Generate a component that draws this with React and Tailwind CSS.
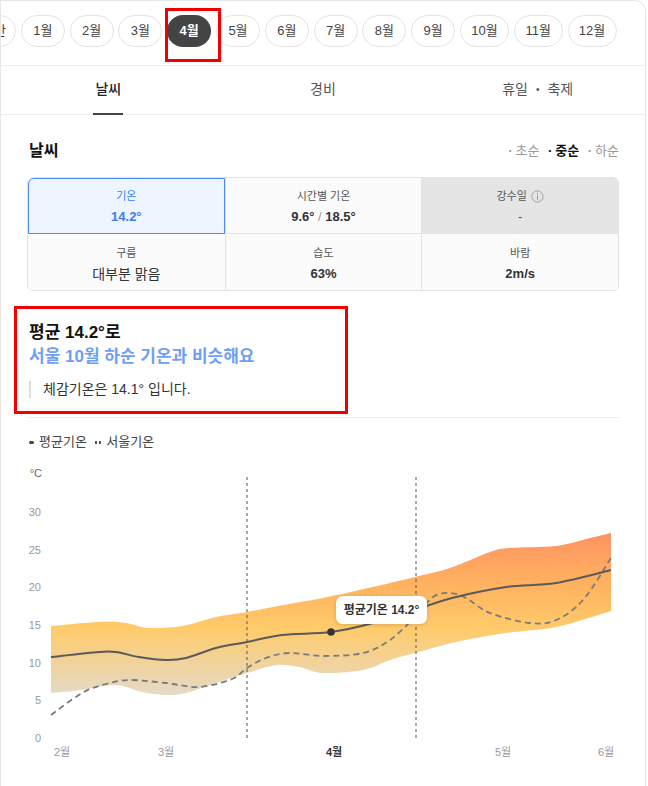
import React from 'react';

const months = ['1월', '2월', '3월', '4월', '5월', '6월', '7월', '8월', '9월', '10월', '11월', '12월'];

// catmull-rom -> bezier, used for the chart curves
function curve(pts, move = true) {
  let d = move ? `M${pts[0][0]},${pts[0][1]}` : `L${pts[0][0]},${pts[0][1]}`;
  for (let i = 0; i < pts.length - 1; i++) {
    const p0 = pts[i - 1] || pts[i];
    const p1 = pts[i];
    const p2 = pts[i + 1];
    const p3 = pts[i + 2] || p2;
    const c1 = [p1[0] + (p2[0] - p0[0]) / 6, p1[1] + (p2[1] - p0[1]) / 6];
    const c2 = [p2[0] - (p3[0] - p1[0]) / 6, p2[1] - (p3[1] - p1[1]) / 6];
    d += ` C${c1[0]},${c1[1]} ${c2[0]},${c2[1]} ${p2[0]},${p2[1]}`;
  }
  return d;
}

const upper = [[52, 626], [100, 622], [127, 623], [150, 628], [183, 626], [217, 617], [248, 612], [290, 604], [324, 598], [374, 587], [416, 577], [451, 568], [491, 552], [511, 548], [557, 546], [591, 538], [612, 533]];
const lower = [[52, 693], [83, 690], [117, 685], [143, 692], [167, 695], [187, 693], [217, 683], [248, 673], [277, 665], [300, 667], [324, 673], [364, 670], [391, 660], [416, 653], [457, 642], [507, 633], [557, 627], [612, 611]];
const mean = [[52, 657], [100, 652], [117, 652], [140, 657], [167, 660], [187, 658], [217, 648], [248, 642], [283, 635], [332, 632], [374, 623], [424, 607], [457, 597], [507, 587], [557, 583], [612, 570]];
const seoul = [[52, 715], [83, 693], [107, 684], [130, 680], [167, 683], [200, 687], [233, 679], [248, 668], [267, 658], [290, 653], [324, 656], [364, 653], [391, 640], [416, 617], [434, 597], [451, 593], [467, 598], [491, 613], [531, 623], [557, 620], [584, 600], [612, 558]];

const band = curve(upper) + ' ' + curve([...lower].reverse(), false) + ' Z';

function Chart() {
  const yTicks = [30, 25, 20, 15, 10, 5, 0];
  const xLabels = [['2월', 63], ['3월', 167], ['4월', 335], ['5월', 504], ['6월', 607]];
  return (
    <svg width="592" height="300" viewBox="28 462 592 300" className="mt-[10px] block">
      <defs>
        <linearGradient id="band" gradientUnits="userSpaceOnUse" x1="0" y1="530" x2="0" y2="695">
          <stop offset="0" stopColor="#fd9161" />
          <stop offset="0.35" stopColor="#ffb45f" />
          <stop offset="0.6" stopColor="#ffcb6b" />
          <stop offset="1" stopColor="#e4dac8" />
        </linearGradient>
        <filter id="shadow" x="-20%" y="-40%" width="140%" height="180%">
          <feDropShadow dx="0" dy="1" stdDeviation="2" floodColor="#000" floodOpacity="0.15" />
        </filter>
      </defs>
      <text x="43" y="474" textAnchor="end" dominantBaseline="middle" fontSize="11" fill="#666">°C</text>
      {yTicks.map((v) => (
        <text key={v} x="42" y={739 - v * 7.533} textAnchor="end" dominantBaseline="middle" fontSize="11" fill="#999">
          {v}
        </text>
      ))}
      <path d={band} fill="url(#band)" />
      <line x1="248" y1="477" x2="248" y2="740" stroke="#555" strokeWidth="1" strokeDasharray="3 3" />
      <line x1="417" y1="477" x2="417" y2="740" stroke="#555" strokeWidth="1" strokeDasharray="3 3" />
      <path d={curve(seoul)} fill="none" stroke="#7a7a7a" strokeWidth="1.8" strokeDasharray="6 4" />
      <path d={curve(mean)} fill="none" stroke="#5a5a5a" strokeWidth="2" />
      <circle cx="332" cy="632" r="3.8" fill="#333" />
      <rect x="337" y="596" width="91" height="28" rx="7" fill="#fff" filter="url(#shadow)" />
      <text x="382.5" y="610.5" textAnchor="middle" dominantBaseline="middle" fontSize="12" fontWeight="600" fill="#333">
        평균기온 14.2°
      </text>
      {xLabels.map(([t, x]) => (
        <text
          key={t}
          x={x}
          y="753"
          textAnchor="middle"
          dominantBaseline="middle"
          fontSize="11"
          fontWeight={t === '4월' ? 700 : 400}
          fill={t === '4월' ? '#333' : '#999'}
        >
          {t}
        </text>
      ))}
    </svg>
  );
}

function Cell({ label, value, className = '', labelClass = 'text-[#555]', valueClass = 'text-[13px] font-bold text-[#333]', info }) {
  return (
    <div className={`flex h-[56px] flex-col items-center justify-center gap-[3px] pt-1 ${className}`}>
      <div className={`flex items-center gap-1 text-[11px] leading-4 ${labelClass}`}>
        {label}
        {info && (
          <svg width="13" height="13" viewBox="0 0 14 14" className="text-[#999]">
            <circle cx="7" cy="7" r="6" fill="none" stroke="currentColor" strokeWidth="1" />
            <line x1="7" y1="6" x2="7" y2="10.5" stroke="currentColor" strokeWidth="1.1" />
            <circle cx="7" cy="4" r="0.8" fill="currentColor" />
          </svg>
        )}
      </div>
      <div className={`leading-5 ${valueClass}`}>{value}</div>
    </div>
  );
}

export default function App() {
  return (
    <div className="min-h-screen bg-white font-['Liberation_Sans','Noto_Sans_CJK_KR',sans-serif] text-[#222]">
      <div className="relative min-h-[786px] w-[646px] overflow-hidden rounded-tr-xl border-x border-t border-[#e6e6e6]">
        {/* month pills */}
        <div className="flex h-[65px] gap-[4.8px] overflow-hidden border-b border-[#ececec] pt-[14px]">
          <div className="ml-[-29px] flex h-8 w-11 shrink-0 items-center justify-center rounded-full border border-[#e3e3e3] text-[13px] text-[#444]">
            연간
          </div>
          {months.map((m) => (
            <div
              key={m}
              className={`flex h-8 shrink-0 items-center justify-center rounded-full text-[13px] ${
                m.length > 2 ? 'w-[49px]' : 'w-11'
              } ${m === '4월' ? 'bg-[#444] font-bold text-white' : 'border border-[#e3e3e3] text-[#444]'}`}
            >
              {m}
            </div>
          ))}
        </div>

        {/* tabs */}
        <div className="grid h-[49px] grid-cols-3 border-b border-[#ececec] text-[14px]">
          <div className="flex items-center justify-center">
            <span className="relative flex h-full items-center pb-px font-medium text-[#222]">
              날씨
              <span className="absolute -bottom-px left-[-2px] right-[-2px] h-[2px] bg-[#444]" />
            </span>
          </div>
          <div className="flex items-center justify-center pb-px text-[#555]">경비</div>
          <div className="flex items-center justify-center gap-2 pb-px text-[#555]">
            <span>휴일</span>
            <span className="text-[10px]">•</span>
            <span>축제</span>
          </div>
        </div>

        <div className="px-[26px]">
          <div className="mt-[24px] flex h-6 items-center justify-between pl-[2px]">
            <h2 className="text-[16px] font-bold text-[#111]">날씨</h2>
            <div className="flex items-center gap-[9px] text-[13px] text-[#999]">
              <span className="flex items-center gap-[4px]">
                <span className="text-[8px]">•</span>초순
              </span>
              <span className="flex items-center gap-[4px] font-bold text-[#111]">
                <span className="text-[8px]">•</span>중순
              </span>
              <span className="flex items-center gap-[4px]">
                <span className="text-[8px]">•</span>하순
              </span>
            </div>
          </div>

          <div className="mt-[14px] grid grid-cols-3 overflow-hidden rounded-md border border-[#e3e3e3]">
            <Cell
              label="기온"
              value="14.2°"
              className="rounded-tl-md bg-[#eef5ff] outline-1 -outline-offset-1 outline-[#4a8af4] border-b border-[#e3e3e3]"
              labelClass="text-[#3b7ef0]"
              valueClass="text-[13px] font-bold text-[#3b7ef0]"
            />
            <Cell
              label="시간별 기온"
              value={
                <span>
                  9.6° <span className="font-normal text-[#999]">/</span> 18.5°
                </span>
              }
              className="border-b border-l border-[#e3e3e3] bg-[#fbfbfb]"
            />
            <Cell label="강수일" value="-" info className="border-b border-l border-[#e3e3e3] bg-[#e5e5e5]" valueClass="text-[13px] text-[#555]" />
            <Cell label="구름" value="대부분 맑음" className="bg-[#fbfbfb]" valueClass="text-[14px] font-normal text-[#333]" />
            <Cell label="습도" value="63%" className="border-l border-[#e3e3e3] bg-[#fbfbfb]" />
            <Cell label="바람" value="2m/s" className="border-l border-[#e3e3e3] bg-[#fbfbfb]" />
          </div>

          <div className="mt-[30px] pl-[2px]">
            <p className="text-[17px] font-bold leading-6 text-[#111]">평균 14.2°로</p>
            <p className="text-[17px] font-bold leading-6 text-[#6e9ff7]">서울 10월 하순 기온과 비슷해요</p>
            <p className="mt-3 border-l-2 border-[#ddd] pl-3 text-[14px] leading-[17px] text-[#333]">체감기온은 14.1° 입니다.</p>
          </div>

          <div className="mt-[19px] border-t border-[#ececec]" />

          <div className="mt-[14px] flex h-5 items-center gap-2 pl-[2px] text-[13px] text-[#444]">
            <span className="flex items-center gap-[5px]">
              <span className="h-[3px] w-[5px] rounded-sm bg-[#444]" />
              평균기온
            </span>
            <span className="flex items-center gap-[5px]">
              <span className="flex gap-[1.5px]">
                <span className="h-[3px] w-[2.5px] bg-[#555]" />
                <span className="h-[3px] w-[2.5px] bg-[#555]" />
              </span>
              서울기온
            </span>
          </div>

          <Chart />
        </div>

        {/* red annotation boxes */}
        <div className="absolute left-[164px] top-[7px] h-[54px] w-[56px] border-[3px] border-[#f00000]" />
        <div className="absolute left-[13px] top-[305px] h-[108px] w-[334px] border-[3px] border-[#f00000]" />
      </div>
    </div>
  );
}
